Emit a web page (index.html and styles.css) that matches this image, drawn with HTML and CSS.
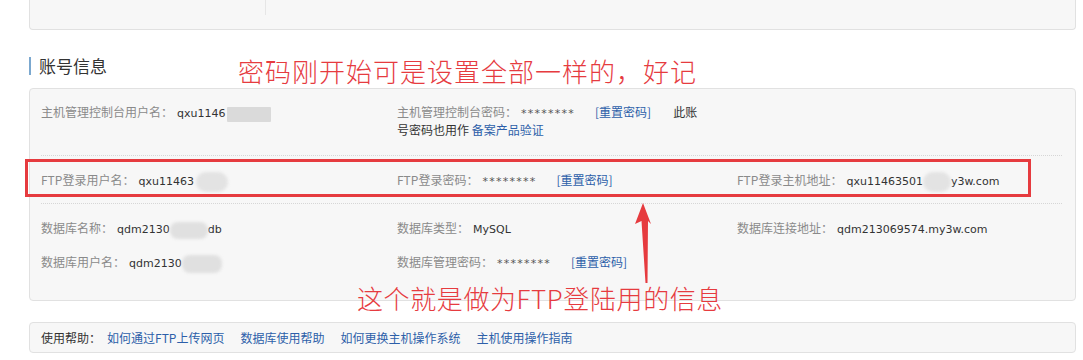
FILE: index.html
```html
<!DOCTYPE html>
<html lang="zh-CN">
<head>
<meta charset="utf-8">
<title>账号信息</title>
<link rel="stylesheet" href="styles.css">
</head>
<body>
<div class="page">
  <div class="top-card"><div class="top-cell"></div></div>

  <h2 class="section-title">账号信息</h2>

  <div class="info-card">
    <div class="info-group">
      <div class="field"><span class="label">主机管理控制台用户名：</span><span class="value">qxu1146<span class="mask mask-rect"></span></span></div>
      <div class="field field-narrow"><span class="label">主机管理控制台密码：</span><span class="value stars">********</span><a class="link reset" href="#">[重置密码]</a><span class="note">此账</span><br><span>号密码也用作</span> <a class="link" href="#">备案产品验证</a></div>
      <div class="field"></div>
    </div>
    <div class="info-group">
      <div class="field"><span class="label">FTP登录用户名：</span><span class="value">qxu11463<span class="mask mask-ftp-user"></span></span></div>
      <div class="field"><span class="label">FTP登录密码：</span><span class="value stars">********</span><a class="link reset" href="#">[重置密码]</a></div>
      <div class="field"><span class="label">FTP登录主机地址：</span><span class="value">qxu11463501<span class="mask mask-ftp-host"></span>y3w.com</span></div>
    </div>
    <div class="info-group last">
      <div class="field"><span class="label">数据库名称：</span><span class="value">qdm2130<span class="mask mask-db-name"></span>db</span></div>
      <div class="field"><span class="label">数据库类型：</span><span class="value">MySQL</span></div>
      <div class="field"><span class="label">数据库连接地址：</span><span class="value">qdm213069574.my3w.com</span></div>
      <div class="field"><span class="label">数据库用户名：</span><span class="value">qdm2130<span class="mask mask-db-user"></span></span></div>
      <div class="field"><span class="label">数据库管理密码：</span><span class="value stars">********</span><a class="link reset" href="#">[重置密码]</a></div>
      <div class="field"></div>
    </div>
  </div>

  <div class="help-bar">
    <span class="help-label">使用帮助：</span>
    <a class="link help-link" href="#">如何通过FTP上传网页</a>
    <a class="link help-link" href="#">数据库使用帮助</a>
    <a class="link help-link" href="#">如何更换主机操作系统</a>
    <a class="link help-link" href="#">主机使用操作指南</a>
  </div>

  <div class="ftp-box"></div>
  <p class="annotation note-top">密码刚开始可是设置全部一样的，好记</p>
  <p class="annotation note-bottom">这个就是做为FTP登陆用的信息</p>
  <svg class="arrow" width="26" height="90" viewBox="0 0 26 90" aria-hidden="true">
    <path d="M13 3 L5 24 L11.5 21 L15.5 83 L17.5 83 L18 21 L21 24 Z" fill="#e63b3f"/>
  </svg>
</div>
</body>
</html>
```

FILE: styles.css
```css
html, body {
  margin: 0;
  padding: 0;
  background: #fff;
}

body {
  font-family: "Noto Sans CJK SC", "Noto Sans", sans-serif;
  font-size: 12px;
  color: #333;
}

.page {
  position: relative;
  width: 1047px;
  height: 360px;
  padding-left: 29px;
  overflow: hidden;
}

/* previous card (cut off at top) */
.top-card {
  height: 29px;
  background: #f7f7f7;
  border: 1px solid #e1e1e1;
  border-top: none;
  border-radius: 0 0 4px 4px;
}

.top-cell {
  width: 235px;
  height: 15px;
  border-right: 1px solid #e6e6e6;
}

/* section title */
.section-title {
  margin: 27px 0 0 0;
  height: 18px;
  line-height: 18px;
  padding-left: 8px;
  border-left: 2px solid #7ba8cf;
  font-size: 17px;
  font-weight: normal;
  color: #333;
}

/* account info card */
.info-card {
  margin-top: 13px;
  background: #f7f7f7;
  border: 1px solid #e1e1e1;
  border-radius: 4px;
  padding: 0 13px 0 11px;
}

.info-group {
  display: grid;
  grid-template-columns: 356px 340px 1fr;
  grid-auto-rows: 18px;
  row-gap: 16px;
  padding: 14px 0 16px;
  border-bottom: 1px dotted #d6d6d6;
}

.info-group:first-child {
  grid-auto-rows: auto;
}

.info-group + .info-group {
  padding: 15px 0 14px;
}

.info-group.last {
  padding: 15px 0 29px;
  border-bottom: none;
}

.field {
  line-height: 18px;
  min-height: 18px;
  color: #333;
}

.field-narrow {
  max-width: 306px;
}

.label {
  color: #8a8a8a;
}

.value {
  margin-left: 4px;
  font-family: "DejaVu Sans", "Noto Sans CJK SC", sans-serif;
  font-size: 11px;
  line-height: 12px;
  color: #333;
}

.stars {
  letter-spacing: 1.25px;
  color: #555;
}

.link {
  color: #2d5fa9;
  text-decoration: none;
}

.reset {
  margin-left: 20px;
}

.note {
  margin-left: 22px;
}

/* blurred-out parts of values */
.mask {
  display: inline-block;
  vertical-align: middle;
  height: 16px;
  margin: -6px 0;
  background: #dcdcdc;
  border-radius: 8px;
  filter: blur(1.5px);
}

.mask-rect {
  width: 44px;
  height: 15px;
  margin-left: 2px;
  border-radius: 1px;
  filter: none;
  background: #dadada;
}

.mask-ftp-user {
  width: 32px;
  height: 20px;
  margin-left: 2px;
  border-radius: 10px;
  background: #e3e3e3;
}

.mask-ftp-host {
  width: 28px;
  height: 20px;
  border-radius: 10px;
  background: #e3e3e3;
}

.mask-db-name {
  width: 38px;
  height: 17px;
  background: #e0e0e0;
}

.mask-db-user {
  width: 40px;
  height: 18px;
  background: #e0e0e0;
}

/* help bar */
.help-bar {
  box-sizing: border-box;
  margin-top: 21px;
  height: 31px;
  background: #f7f7f7;
  border: 1px solid #e1e1e1;
  border-radius: 4px;
  padding: 0 11px;
  white-space: nowrap;
  display: flex;
  align-items: center;
}

.help-label {
  color: #333;
  margin-right: 6px;
}

.help-link {
  margin-right: 16px;
}

/* annotations drawn over the screenshot */
.ftp-box {
  position: absolute;
  left: 25px;
  top: 159px;
  width: 1006px;
  height: 38px;
  box-sizing: border-box;
  border: 3px solid #e63b3f;
}

.annotation {
  position: absolute;
  margin: 0;
  font-family: "Noto Sans CJK SC", sans-serif;
  font-weight: 300;
  font-size: 26px;
  line-height: 28px;
  letter-spacing: 1px;
  color: #e63b3f;
  white-space: nowrap;
}

.note-top {
  left: 238px;
  top: 57px;
}

.note-bottom {
  left: 357px;
  top: 284px;
  letter-spacing: 0.6px;
}

.arrow {
  position: absolute;
  left: 630px;
  top: 200px;
}
```
